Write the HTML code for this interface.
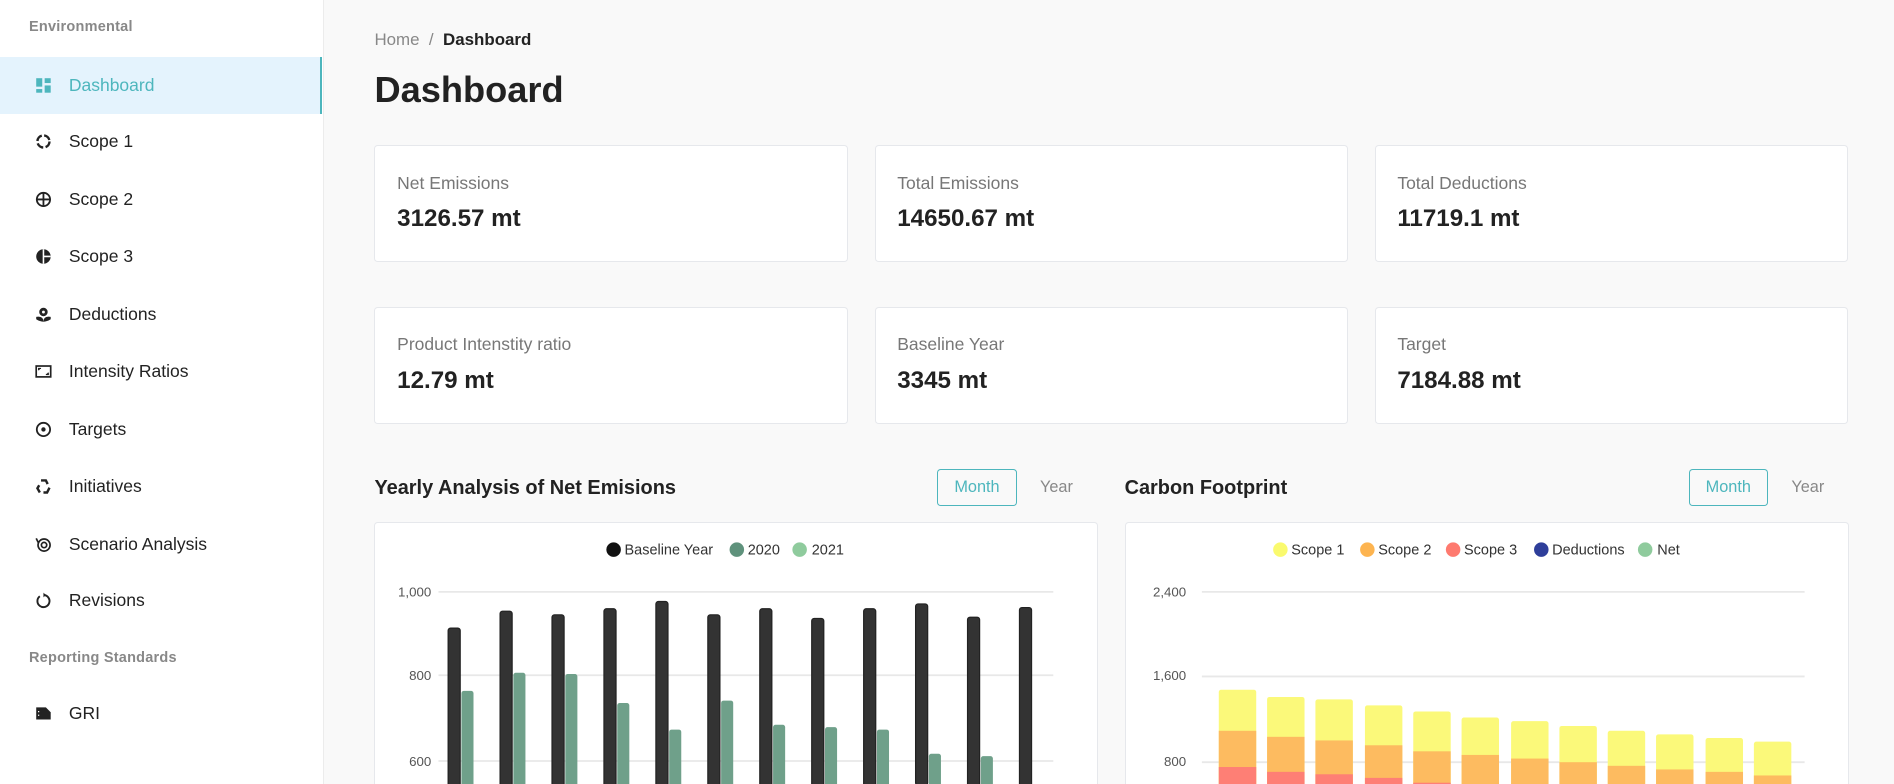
<!DOCTYPE html>
<html><head><meta charset="utf-8"><style>
html{margin:0;padding:0;width:1894px;height:784px;overflow:hidden;background:#f9f9f9}
body{margin:0;padding:0;width:1568px;height:649px;zoom:1.20791;overflow:hidden;background:#f9f9f9;font-family:"Liberation Sans",sans-serif;position:relative;color:#212121}
.side{position:absolute;left:0;top:0;width:267px;height:649px;background:#fff;border-right:1px solid #ececec}
.sec{position:absolute;left:24px;font-size:12px;color:#888;font-weight:bold;letter-spacing:.2px}
.item{position:absolute;left:0;width:267px;height:47px;display:flex;align-items:center;font-size:14.5px;color:#222}
.item svg{position:absolute;left:29px;width:14px;height:14px}
.item span{position:absolute;left:57px}
.item.act{background:#e4f3fd;color:#4db6bd;border-right:2px solid #4db6bd;width:265px}
.abs{position:absolute}
.card{position:absolute;background:#fff;border:1px solid #e6e8ec;border-radius:3px;width:390px;height:95px}
.card .l{position:absolute;left:18px;top:22px;font-size:14.5px;color:#777}
.card .v{position:absolute;left:18px;top:49px;font-size:20px;color:#222;font-weight:bold}
.h{position:absolute;font-size:16.5px;font-weight:bold;color:#222}
.btn{position:absolute;border:1px solid #4db6bd;border-radius:3px;color:#4db6bd;font-size:13.5px;text-align:center;line-height:29px;width:64px;height:29px}
.yr{position:absolute;font-size:13.5px;color:#888}
.chart{position:absolute;background:#fff;border:1px solid #e6e8ec;border-bottom:none;border-radius:3px 3px 0 0;top:432px;height:216px}
</style></head><body>
<div class="side">
<div class="sec" style="top:16px">Environmental</div>
<div class="item act" style="top:47px"><svg viewBox="0 0 14 14"><rect x="1" y="1" width="5" height="7" fill="#4db6bd"/><rect x="8" y="1" width="5" height="4" fill="#4db6bd"/><rect x="1" y="10" width="5" height="3" fill="#4db6bd"/><rect x="8" y="7" width="5" height="6" fill="#4db6bd"/></svg><span>Dashboard</span></div>
<div class="item" style="top:94px"><svg viewBox="0 0 14 14"><circle cx="7" cy="7" r="5" fill="none" stroke="#222" stroke-width="2" stroke-dasharray="6 2"/></svg><span>Scope 1</span></div>
<div class="item" style="top:142px"><svg viewBox="0 0 14 14"><circle cx="7" cy="7" r="5.5" fill="none" stroke="#222" stroke-width="1.5"/><path d="M7 1.5V12.5M1.5 7H12.5" stroke="#222" stroke-width="1.5"/></svg><span>Scope 2</span></div>
<div class="item" style="top:189px"><svg viewBox="0 0 14 14"><circle cx="7" cy="7" r="6" fill="#222"/><path d="M7 1V13M7 7H13" stroke="#fff" stroke-width="1.3"/></svg><span>Scope 3</span></div>
<div class="item" style="top:237px"><svg viewBox="0 0 14 14"><circle cx="7" cy="5" r="3.5" fill="#222"/><circle cx="7" cy="5" r="1.2" fill="#fff"/><path d="M1 9Q7 8 7 13Q7 8 13 9L13 11Q7 15 1 11Z" fill="#222"/></svg><span>Deductions</span></div>
<div class="item" style="top:284px"><svg viewBox="0 0 14 14"><rect x="1" y="2.5" width="12" height="9" fill="none" stroke="#222" stroke-width="1.4"/><path d="M3 6V4.5H5M11 8V9.5H9" stroke="#222" stroke-width="1"/></svg><span>Intensity Ratios</span></div>
<div class="item" style="top:332px"><svg viewBox="0 0 14 14"><circle cx="7" cy="7" r="5.5" fill="none" stroke="#222" stroke-width="1.5"/><circle cx="7" cy="7" r="1.8" fill="#222"/></svg><span>Targets</span></div>
<div class="item" style="top:379px"><svg viewBox="0 0 14 14"><path d="M5 2L9 2L10.5 5M12 8L10 12H7M4 12L2 8.5L3.5 6" fill="none" stroke="#222" stroke-width="2"/></svg><span>Initiatives</span></div>
<div class="item" style="top:427px"><svg viewBox="0 0 14 14"><circle cx="7.5" cy="7.5" r="5" fill="none" stroke="#222" stroke-width="1.4"/><circle cx="7.5" cy="7.5" r="2.2" fill="none" stroke="#222" stroke-width="1.4"/><path d="M1 2L3 6" stroke="#222" stroke-width="1.4"/></svg><span>Scenario Analysis</span></div>
<div class="item" style="top:474px"><svg viewBox="0 0 14 14"><path d="M4 3.5A5 5 0 1 0 7 2.5" fill="none" stroke="#222" stroke-width="1.6"/><path d="M7 0.5L9 2.5L7 4.5Z" fill="#222"/></svg><span>Revisions</span></div>
<div class="sec" style="top:538px">Reporting Standards</div>
<div class="item" style="top:567px"><svg viewBox="0 0 14 14"><path d="M1 2H9L13 6V12H1Z" fill="#222"/><path d="M3 5V6M3 8V9" stroke="#fff" stroke-width="1"/></svg><span>GRI</span></div>
</div>

<div class="abs" style="left:310px;top:25px;font-size:14px;color:#888">Home &nbsp;/ &nbsp;<b style="color:#222">Dashboard</b></div>
<div class="abs" style="left:310px;top:57px;font-size:30px;font-weight:bold;color:#222">Dashboard</div>

<div class="card" style="left:310px;top:120px"><div class="l">Net Emissions</div><div class="v">3126.57 mt</div></div>
<div class="card" style="left:724px;top:120px"><div class="l">Total Emissions</div><div class="v">14650.67 mt</div></div>
<div class="card" style="left:1138px;top:120px"><div class="l">Total Deductions</div><div class="v">11719.1 mt</div></div>
<div class="card" style="left:310px;top:254px"><div class="l">Product Intenstity ratio</div><div class="v">12.79 mt</div></div>
<div class="card" style="left:724px;top:254px"><div class="l">Baseline Year</div><div class="v">3345 mt</div></div>
<div class="card" style="left:1138px;top:254px"><div class="l">Target</div><div class="v">7184.88 mt</div></div>

<div class="h" style="left:310px;top:395px">Yearly Analysis of Net Emisions</div>
<div class="btn" style="left:776px;top:388px">Month</div>
<div class="yr" style="left:861px;top:396px">Year</div>
<div class="h" style="left:931px;top:395px">Carbon Footprint</div>
<div class="btn" style="left:1398px;top:388px">Month</div>
<div class="yr" style="left:1483px;top:396px">Year</div>

<div class="chart" style="left:310px;width:597px"></div>
<div class="chart" style="left:931px;width:598px"></div>

<svg class="abs" style="left:0;top:0" width="1568" height="649" font-family="Liberation Sans, sans-serif">
<g font-size="12" fill="#333">
<circle cx="508" cy="455" r="6" fill="#111"/><text x="517" y="459">Baseline Year</text>
<circle cx="610" cy="455" r="6" fill="#5f927c"/><text x="619" y="459">2020</text>
<circle cx="662" cy="455" r="6" fill="#8fcb9d"/><text x="672" y="459">2021</text>
</g>
<g font-size="11" fill="#555" text-anchor="end">
<text x="357" y="494">1,000</text><text x="357" y="563">800</text><text x="357" y="634">600</text>
<text x="982" y="494">2,400</text><text x="982" y="563">1,600</text><text x="982" y="634">800</text>
</g>
<g stroke="#e8e8e8" stroke-width="1.5">
<line x1="363" y1="490" x2="872" y2="490"/><line x1="363" y1="559" x2="872" y2="559"/><line x1="363" y1="630" x2="872" y2="630"/>
<line x1="995" y1="490" x2="1494" y2="490"/><line x1="995" y1="560" x2="1494" y2="560"/><line x1="995" y1="631" x2="1494" y2="631"/>
</g>
<g font-size="12" fill="#333">
<circle cx="1060" cy="455" r="6" fill="#fafa6e"/><text x="1069" y="459">Scope 1</text>
<circle cx="1132" cy="455" r="6" fill="#fdb450"/><text x="1141" y="459">Scope 2</text>
<circle cx="1203" cy="455" r="6" fill="#fe7a6f"/><text x="1212" y="459">Scope 3</text>
<circle cx="1276" cy="455" r="6" fill="#2e3e9a"/><text x="1285" y="459">Deductions</text>
<circle cx="1362" cy="455" r="6" fill="#8fcb9d"/><text x="1372" y="459">Net</text>
</g>
<g>
<rect x="371" y="520" width="10" height="140" rx="2" fill="#333" stroke="#222"/><rect x="382" y="572" width="10" height="90" rx="2" fill="#6fa08a"/>
<rect x="414" y="506" width="10" height="150" rx="2" fill="#333" stroke="#222"/><rect x="425" y="557" width="10" height="100" rx="2" fill="#6fa08a"/>
<rect x="457" y="509" width="10" height="150" rx="2" fill="#333" stroke="#222"/><rect x="468" y="558" width="10" height="100" rx="2" fill="#6fa08a"/>
<rect x="500" y="504" width="10" height="150" rx="2" fill="#333" stroke="#222"/><rect x="511" y="582" width="10" height="100" rx="2" fill="#6fa08a"/>
<rect x="543" y="498" width="10" height="160" rx="2" fill="#333" stroke="#222"/><rect x="554" y="604" width="10" height="100" rx="2" fill="#6fa08a"/>
<rect x="586" y="509" width="10" height="150" rx="2" fill="#333" stroke="#222"/><rect x="597" y="580" width="10" height="100" rx="2" fill="#6fa08a"/>
<rect x="629" y="504" width="10" height="150" rx="2" fill="#333" stroke="#222"/><rect x="640" y="600" width="10" height="100" rx="2" fill="#6fa08a"/>
<rect x="672" y="512" width="10" height="150" rx="2" fill="#333" stroke="#222"/><rect x="683" y="602" width="10" height="100" rx="2" fill="#6fa08a"/>
<rect x="715" y="504" width="10" height="150" rx="2" fill="#333" stroke="#222"/><rect x="726" y="604" width="10" height="100" rx="2" fill="#6fa08a"/>
<rect x="758" y="500" width="10" height="150" rx="2" fill="#333" stroke="#222"/><rect x="769" y="624" width="10" height="100" rx="2" fill="#6fa08a"/>
<rect x="801" y="511" width="10" height="150" rx="2" fill="#333" stroke="#222"/><rect x="812" y="626" width="10" height="100" rx="2" fill="#6fa08a"/>
<rect x="844" y="503" width="10" height="150" rx="2" fill="#333" stroke="#222"/>
</g>
<g>
<rect x="1009" y="571" width="31" height="100" rx="2" fill="#fbf97a"/><rect x="1009" y="605" width="31" height="60" fill="#fdbb60"/><rect x="1009" y="635" width="31" height="20" fill="#fe7f75"/>
<rect x="1049" y="577" width="31" height="100" rx="2" fill="#fbf97a"/><rect x="1049" y="610" width="31" height="60" fill="#fdbb60"/><rect x="1049" y="639" width="31" height="20" fill="#fe7f75"/>
<rect x="1089" y="579" width="31" height="100" rx="2" fill="#fbf97a"/><rect x="1089" y="613" width="31" height="60" fill="#fdbb60"/><rect x="1089" y="641" width="31" height="20" fill="#fe7f75"/>
<rect x="1130" y="584" width="31" height="100" rx="2" fill="#fbf97a"/><rect x="1130" y="617" width="31" height="60" fill="#fdbb60"/><rect x="1130" y="644" width="31" height="20" fill="#fe7f75"/>
<rect x="1170" y="589" width="31" height="100" rx="2" fill="#fbf97a"/><rect x="1170" y="622" width="31" height="60" fill="#fdbb60"/><rect x="1170" y="648" width="31" height="20" fill="#fe7f75"/>
<rect x="1210" y="594" width="31" height="100" rx="2" fill="#fbf97a"/><rect x="1210" y="625" width="31" height="60" fill="#fdbb60"/>
<rect x="1251" y="597" width="31" height="100" rx="2" fill="#fbf97a"/><rect x="1251" y="628" width="31" height="60" fill="#fdbb60"/>
<rect x="1291" y="601" width="31" height="100" rx="2" fill="#fbf97a"/><rect x="1291" y="631" width="31" height="60" fill="#fdbb60"/>
<rect x="1331" y="605" width="31" height="100" rx="2" fill="#fbf97a"/><rect x="1331" y="634" width="31" height="60" fill="#fdbb60"/>
<rect x="1371" y="608" width="31" height="100" rx="2" fill="#fbf97a"/><rect x="1371" y="637" width="31" height="60" fill="#fdbb60"/>
<rect x="1412" y="611" width="31" height="100" rx="2" fill="#fbf97a"/><rect x="1412" y="639" width="31" height="60" fill="#fdbb60"/>
<rect x="1452" y="614" width="31" height="100" rx="2" fill="#fbf97a"/><rect x="1452" y="642" width="31" height="60" fill="#fdbb60"/>
</g>
</svg>
</body></html>
